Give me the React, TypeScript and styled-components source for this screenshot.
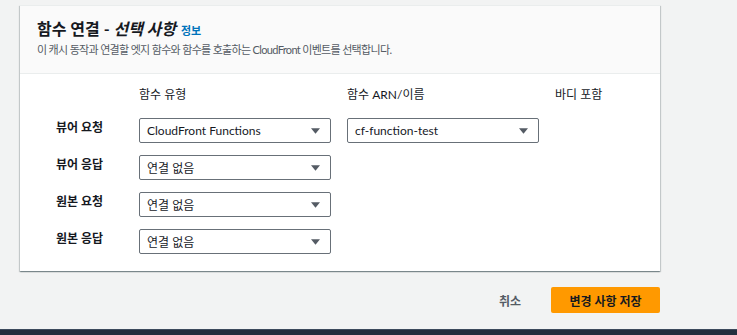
import styled, { createGlobalStyle } from "styled-components";

const GlobalStyle = createGlobalStyle`
  html,
  body {
    margin: 0;
    padding: 0;
    background-color: #f2f3f3;
  }

  body {
    font-family: "Lato", "Noto Sans CJK KR", sans-serif;
    color: #16191f;
  }
`;

interface Association {
  label: string;
  type: string;
  arn?: string;
}

const associations: Association[] = [
  { label: "뷰어 요청", type: "CloudFront Functions", arn: "cf-function-test" },
  { label: "뷰어 응답", type: "연결 없음" },
  { label: "원본 요청", type: "연결 없음" },
  { label: "원본 응답", type: "연결 없음" },
];

const Caret = () => (
  <CaretIcon viewBox="0 0 10 6" aria-hidden>
    <path d="M0 0 H10 L5 6 Z" fill="currentColor" />
  </CaretIcon>
);

const Select = ({ value }: { value: string }) => (
  <SelectBox>
    <SelectValue>{value}</SelectValue>
    <Caret />
  </SelectBox>
);

const App = () => {
  return (
    <Page>
      <GlobalStyle />

      <Card>
        <CardHeader>
          <Title>
            함수 연결 - <em>선택 사항</em>
            <InfoLink>정보</InfoLink>
          </Title>
          <Description>
            이 캐시 동작과 연결할 엣지 함수와 함수를 호출하는 CloudFront
            이벤트를 선택합니다.
          </Description>
        </CardHeader>

        <CardBody>
          <span />
          <ColumnHeader>함수 유형</ColumnHeader>
          <ColumnHeader>함수 ARN/이름</ColumnHeader>
          <ColumnHeader>바디 포함</ColumnHeader>

          {associations.map((item) => (
            <Row key={item.label}>
              <RowLabel>{item.label}</RowLabel>
              <Select value={item.type} />
              {item.arn ? <Select value={item.arn} /> : <span />}
              <span />
            </Row>
          ))}
        </CardBody>
      </Card>

      <Actions>
        <CancelButton>취소</CancelButton>
        <PrimaryButton>변경 사항 저장</PrimaryButton>
      </Actions>

      <BottomBar />
    </Page>
  );
};

const Page = styled.div`
  min-height: 100vh;

  display: flex;
  flex-direction: column;
`;

const Card = styled.section`
  width: 640px;
  margin: 5px 0 0 20px;

  background-color: #ffffff;
  border-top: 1px solid #eaeded;
  box-shadow: 0 1px 1px 0 rgba(0, 28, 36, 0.3),
    1px 1px 1px 0 rgba(0, 28, 36, 0.15), -1px 1px 1px 0 rgba(0, 28, 36, 0.15);
`;

const CardHeader = styled.div`
  padding: 12px 17px 15px;

  background-color: #fafafa;
  border-bottom: 1px solid #eaeded;
`;

const Title = styled.h2`
  margin: 0;

  font-size: 16px;
  line-height: 22px;
  font-weight: 700;
  color: #16191f;

  em {
    font-style: italic;
  }
`;

const InfoLink = styled.a`
  margin-left: 5px;

  font-size: 11px;
  font-weight: 700;
  color: #0073bb;
  cursor: pointer;
`;

const Description = styled.p`
  margin: 0;

  font-size: 11px;
  line-height: 16px;
  letter-spacing: -0.67px;
  color: #545b64;
`;

const CardBody = styled.div`
  padding: 9px 0 17px 36px;

  display: grid;
  grid-template-columns: 67px 192px 192px auto;
  column-gap: 16px;
  row-gap: 12px;
`;

const ColumnHeader = styled.div`
  font-size: 12px;
  line-height: 23px;
  color: #16191f;
`;

const Row = styled.div`
  display: contents;
`;

const RowLabel = styled.div`
  align-self: start;

  font-size: 12px;
  line-height: 20px;
  font-weight: 700;
  color: #16191f;
`;

const SelectBox = styled.div`
  box-sizing: border-box;
  height: 25px;
  padding: 0 10px 0 7px;

  display: flex;
  align-items: center;
  justify-content: space-between;

  background-color: #ffffff;
  border: 1px solid #687078;
  border-radius: 2px;

  cursor: pointer;
`;

const SelectValue = styled.span`
  font-size: 12px;
  color: #16191f;
  white-space: nowrap;
`;

const CaretIcon = styled.svg`
  width: 9px;
  height: 6px;

  color: #545b64;
`;

const Actions = styled.div`
  width: 640px;
  margin: 16px 0 0 20px;

  display: flex;
  align-items: center;
  justify-content: flex-end;
  gap: 10px;
`;

const CancelButton = styled.button`
  height: 26px;
  padding: 0 20px;

  background: none;
  border: none;

  font-family: inherit;
  font-size: 12px;
  font-weight: 700;
  color: #545b64;

  cursor: pointer;
`;

const PrimaryButton = styled.button`
  height: 26px;
  width: 109px;

  background-color: #ff9900;
  border: none;
  border-radius: 2px;

  font-family: inherit;
  font-size: 12px;
  font-weight: 700;
  color: #16191f;

  cursor: pointer;
`;

const BottomBar = styled.div`
  height: 5px;
  margin-top: auto;

  background-color: #232f3e;
  border-top: 1px solid #3d4a5c;
`;

export default App;
